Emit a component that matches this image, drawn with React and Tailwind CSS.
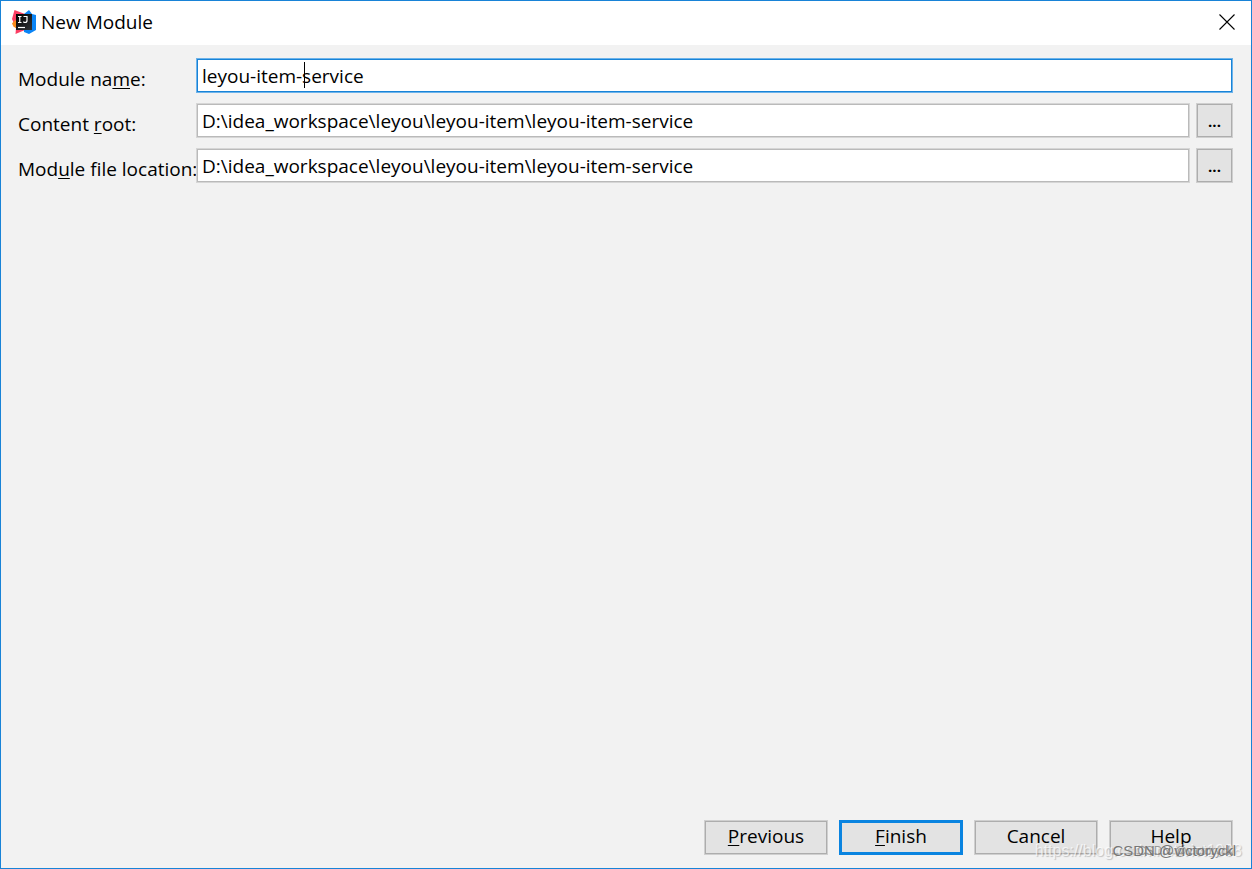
import { useState } from 'react';

const FIELDS = [
  { id: 'content-root', before: 'Content ', key: 'r', after: 'oot:' },
  { id: 'module-file', before: 'Mod', key: 'u', after: 'le file location:' },
];

const MODULE_PATH = 'D:\\idea_workspace\\leyou\\leyou-item\\leyou-item-service';

const LABEL = 'w-[178px] shrink-0 pt-1.5 whitespace-nowrap';
const BUTTON = 'h-[35px] w-[124px] border border-[#cfcfcf] bg-[#e3e3e3] pb-1 inset-ring inset-ring-[#adadad]';

const Mnemonic = ({ children }) => (
  <span className="underline decoration-1 underline-offset-2">{children}</span>
);

const IdeaLogo = () => (
  <svg className="size-6" viewBox="0 0 24 24" aria-hidden="true">
    <defs>
      <linearGradient id="idea-tile" x1="0" y1="0" x2="1" y2="1">
        <stop offset="0" stopColor="#000" />
        <stop offset="1" stopColor="#303236" />
      </linearGradient>
    </defs>
    <path d="M2.500 0 13 4v16L3.500 24 4 18 0 9z" fill="#fb3e63" />
    <path d="m0 13.500 3-3.500 2 2v7l-3.500-2.500z" fill="#f98a1b" />
    <path d="M17 0 12 4v18l5 2 7-4V5l-4-1z" fill="#0a84f5" />
    <path d="M4 4h16v16H4z" fill="url(#idea-tile)" />
    <path d="M6 6.500h3.500M7.750 6.500v6M6 12.500h3.500M11.500 6.500h3.500v4q0 2-2 2-1 0-1.600-.9" fill="none" stroke="#fff" strokeWidth="1.200" />
    <path d="M6 17.500h7" stroke="#fff" strokeWidth="1.200" />
  </svg>
);

const App = () => {
  const [name, setName] = useState('leyou-item-service');

  return (
    <div className="flex min-h-screen flex-col border border-[#1883d7] bg-[#f2f2f2] font-['Open_Sans','Noto_Sans',sans-serif] text-[19px] leading-6 text-black">
      <header className="flex h-11 items-center bg-white pr-4 pb-0.5 pl-[11px]">
        <IdeaLogo />
        <h1 className="ml-[5px] flex-1">New Module</h1>
        <button type="button" aria-label="Close">
          <svg className="size-4" viewBox="0 0 16 16" fill="none" stroke="#000" strokeWidth="1.100">
            <path d="m.5.5 15 15M15.500.5l-15 15" />
          </svg>
        </button>
      </header>

      <form className="flex flex-1 flex-col py-[13px] pr-[18px] pl-[17px]">
        <div className="flex flex-1 flex-col gap-2.5">
          <div className="flex items-center">
            <label className={LABEL} htmlFor="module-name">
              Module na<Mnemonic>m</Mnemonic>e:
            </label>
            <div className="relative min-w-0 flex-1">
              <input
                id="module-name"
                className="block h-[35px] w-full border border-[#6db3ea] bg-white px-[5px] outline-none inset-ring inset-ring-[#1883d7]"
                value={name}
                onChange={(e) => setName(e.target.value)}
              />
              <span className="absolute top-1 left-[108px] h-[26px] w-px bg-black" />
            </div>
          </div>
          {FIELDS.map((field) => (
            <div key={field.id} className="flex items-center">
              <label className={LABEL} htmlFor={field.id}>
                {field.before}
                <Mnemonic>{field.key}</Mnemonic>
                {field.after}
              </label>
              <input
                id={field.id}
                className="h-[35px] min-w-0 flex-1 border border-[#d6d6d6] bg-white px-[5px] outline-none inset-ring inset-ring-[#bababa]"
                defaultValue={MODULE_PATH}
              />
              <button
                type="button"
                aria-label="Browse"
                className="ml-1.5 h-[35px] w-[37px] border border-[#cfcfcf] bg-[#e3e3e3] text-[15px] font-bold inset-ring inset-ring-[#adadad]"
              >
                ...
              </button>
            </div>
          ))}
        </div>

        <div className="flex justify-end gap-[11px]">
          <button type="button" className={BUTTON}>
            <Mnemonic>P</Mnemonic>revious
          </button>
          <button type="button" className="h-[35px] w-[124px] border-3 border-[#0a84e0] bg-[#e3e3e3] pb-1">
            <Mnemonic>F</Mnemonic>inish
          </button>
          <button type="button" className={BUTTON}>Cancel</button>
          <button type="button" className={BUTTON}>Help</button>
        </div>
      </form>

      <div className="pointer-events-none absolute right-2.5 bottom-1.5 font-['Liberation_Sans',sans-serif] text-[16px] text-white/70 [text-shadow:1px_1px_1px_#0003]">
        https://blog.csdn.net/vict1998
      </div>
      <div className="pointer-events-none absolute right-4 bottom-1.5 font-['Liberation_Sans',sans-serif] text-[15px] text-[#777] [text-shadow:1px_1px_0_#fff8]">
        CSDN @victoryckl
      </div>
      <div className="pointer-events-none absolute right-4 bottom-1.5 font-['Liberation_Sans',sans-serif] text-[12px] text-[#777]/70">
        CSDN @victoryckl
      </div>
    </div>
  );
};

export default App;
